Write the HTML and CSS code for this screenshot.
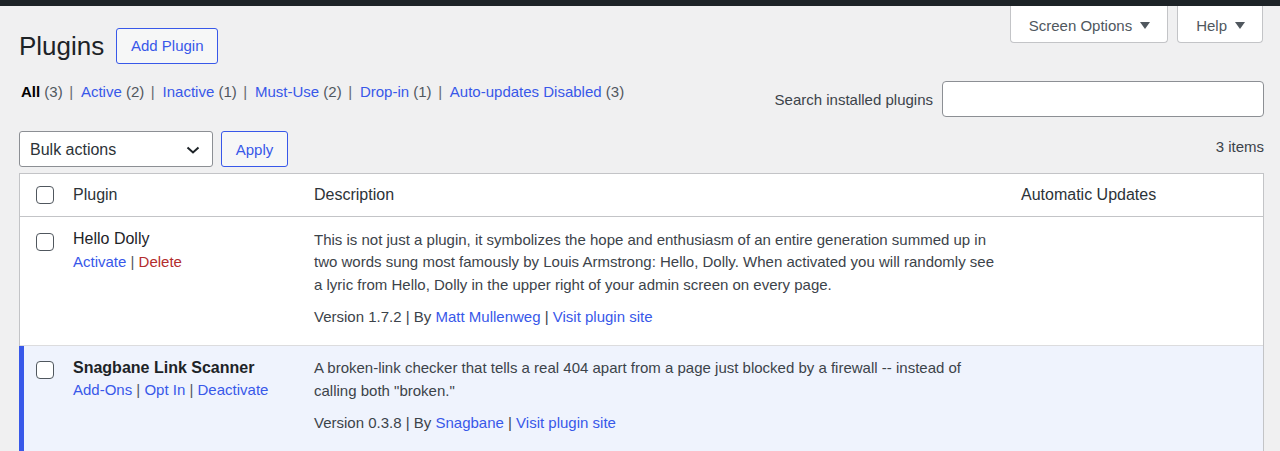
FILE: index.html
```html
<!DOCTYPE html>
<html lang="en">

<head>
  <meta charset="UTF-8">
  <meta name="viewport" content="width=device-width, initial-scale=1.0">
  <title>Plugins</title>
  <link rel="stylesheet" href="styles.css">
</head>

<body>
  <div class="adminbar"></div>

  <div class="screen-meta-links">
    <button class="meta-tab">Screen Options
      <svg width="10" height="7" viewBox="0 0 10 7"><polygon points="0,0 10,0 5,7" fill="#50575e" /></svg>
    </button>
    <button class="meta-tab">Help
      <svg width="10" height="7" viewBox="0 0 10 7"><polygon points="0,0 10,0 5,7" fill="#50575e" /></svg>
    </button>
  </div>

  <div class="wrap">
    <div class="page-head">
      <h1>Plugins</h1>
      <a href="#" class="button">Add Plugin</a>
    </div>

    <div class="filter-row">
      <ul class="subsubsub">
        <li><a href="#" class="current">All</a> <span class="count">(3)</span> <span class="sep">|</span></li>
        <li><a href="#">Active</a> <span class="count">(2)</span> <span class="sep">|</span></li>
        <li><a href="#">Inactive</a> <span class="count">(1)</span> <span class="sep">|</span></li>
        <li><a href="#">Must-Use</a> <span class="count">(2)</span> <span class="sep">|</span></li>
        <li><a href="#">Drop-in</a> <span class="count">(1)</span> <span class="sep">|</span></li>
        <li><a href="#">Auto-updates Disabled</a> <span class="count">(3)</span></li>
      </ul>
      <div class="search-box">
        <label for="plugin-search">Search installed plugins</label>
        <input type="search" id="plugin-search">
      </div>
    </div>

    <div class="tablenav">
      <div class="bulk">
        <div class="select">
          <span>Bulk actions</span>
          <svg width="14" height="8" viewBox="0 0 14 8"><polyline points="1.5,1.5 7,6.5 12.5,1.5" fill="none" stroke="#1d2327" stroke-width="2" /></svg>
        </div>
        <button class="button">Apply</button>
      </div>
      <div class="displaying-num">3 items</div>
    </div>

    <table class="plugins">
      <thead>
        <tr>
          <th class="check-column"><input type="checkbox"></th>
          <th class="col-name">Plugin</th>
          <th class="col-desc">Description</th>
          <th class="col-auto">Automatic Updates</th>
        </tr>
      </thead>
      <tbody>
        <tr class="inactive">
          <th class="check-column"><input type="checkbox"></th>
          <td class="plugin-title">
            <div class="name">Hello Dolly</div>
            <div class="row-actions"><a href="#">Activate</a> | <a href="#" class="delete">Delete</a></div>
          </td>
          <td class="column-description">
            <p>This is not just a plugin, it symbolizes the hope and enthusiasm of an entire generation summed up in two words sung most famously by Louis Armstrong: Hello, Dolly. When activated you will randomly see a lyric from Hello, Dolly in the upper right of your admin screen on every page.</p>
            <div class="plugin-version">Version 1.7.2 | By <a href="#">Matt Mullenweg</a> | <a href="#">Visit plugin site</a></div>
          </td>
          <td class="column-auto"></td>
        </tr>
        <tr class="active">
          <th class="check-column"><input type="checkbox"></th>
          <td class="plugin-title">
            <div class="name"><strong>Snagbane Link Scanner</strong></div>
            <div class="row-actions"><a href="#">Add-Ons</a> | <a href="#">Opt In</a> | <a href="#">Deactivate</a></div>
          </td>
          <td class="column-description">
            <p>A broken-link checker that tells a real 404 apart from a page just blocked by a firewall -- instead of calling both "broken."</p>
            <div class="plugin-version">Version 0.3.8 | By <a href="#">Snagbane</a> | <a href="#">Visit plugin site</a></div>
          </td>
          <td class="column-auto"></td>
        </tr>
      </tbody>
    </table>
  </div>
</body>

</html>
```

FILE: styles.css
```css
* {
  box-sizing: border-box;
}

body {
  margin: 0;
  background: #f0f0f1;
  color: #3c434a;
  font-family: "Liberation Sans", Arial, sans-serif;
  font-size: 15px;
  line-height: 22.5px;
}

a {
  color: #3858e9;
  text-decoration: none;
}

.adminbar {
  height: 6px;
  background: #1d2327;
}

.screen-meta-links {
  float: right;
  display: flex;
  gap: 9px;
  margin-right: 17px;
}

.meta-tab {
  display: flex;
  align-items: center;
  gap: 8px;
  height: 37px;
  padding: 2px 17px 0 18px;
  background: white;
  border: 1px solid #c3c4c7;
  border-top: none;
  border-radius: 0 0 4px 4px;
  color: #50575e;
  font-family: inherit;
  font-size: 15px;
}

.wrap {
  padding: 22px 16px 0 19px;
}

.page-head {
  display: flex;
  align-items: center;
  height: 36px;
}

.page-head h1 {
  margin: 0 12px 0 0;
  font-size: 26px;
  font-weight: 400;
  line-height: 36px;
  color: #1d2327;
}

.button {
  display: inline-flex;
  align-items: center;
  height: 36px;
  padding: 0 13.7px;
  background: #f6f7f7;
  border: 1px solid #3858e9;
  border-radius: 3px;
  color: #3858e9;
  font-family: inherit;
  font-size: 15px;
}

.filter-row {
  display: flex;
  justify-content: space-between;
  align-items: flex-start;
  margin-top: 17px;
}

.subsubsub {
  list-style: none;
  margin: 0;
  padding: 1px 0 0 2px;
  line-height: 20px;
  color: #646970;
}

.subsubsub li {
  display: inline;
}

.subsubsub .current {
  color: #000;
  font-weight: 700;
}

.subsubsub .count {
  color: #50575e;
}

.subsubsub .sep {
  margin: 0 3.6px 0 2.4px;
}

.search-box {
  display: flex;
  align-items: center;
  gap: 9px;
}

.search-box label {
  padding-top: 2px;
  color: #3c434a;
}

.search-box input {
  width: 322px;
  height: 36px;
  margin: 0;
  border: 1px solid #8c8f94;
  border-radius: 4px;
  background: white;
}

.tablenav {
  display: flex;
  justify-content: space-between;
  margin-top: 14px;
  height: 36px;
}

.bulk {
  display: flex;
  gap: 8px;
}

.select {
  display: flex;
  align-items: center;
  justify-content: space-between;
  width: 194px;
  height: 36px;
  padding: 2px 12px 0 10px;
  background: white;
  border: 1px solid #8c8f94;
  border-radius: 3px;
  color: #2c3338;
  font-size: 16px;
}

.displaying-num {
  margin-top: 6px;
  line-height: 20px;
  color: #3c434a;
}

.plugins {
  width: 100%;
  margin-top: 6px;
  table-layout: fixed;
  border-collapse: separate;
  border-spacing: 0;
  background: white;
  border: 1px solid #c3c4c7;
}

.plugins thead th {
  padding: 10px 10px;
  font-size: 16px;
  font-weight: 400;
  line-height: 22px;
  text-align: left;
  color: #2c3338;
  border-bottom: 1px solid #c3c4c7;
}

.plugins .check-column {
  width: 43px;
  padding-left: 16px;
  padding-right: 0;
}

.plugins .col-name {
  width: 241px;
}

.plugins .col-desc {
  width: 707px;
}

.plugins input[type="checkbox"] {
  appearance: none;
  display: block;
  width: 18px;
  height: 18px;
  margin: 0;
  background: white;
  border: 1px solid #50575e;
  border-radius: 4px;
}

.plugins tbody th,
.plugins tbody td {
  vertical-align: top;
  text-align: left;
  border-bottom: 1px solid #dcdcde;
}

.plugins tbody tr:last-child th,
.plugins tbody tr:last-child td {
  border-bottom: none;
}

.plugins tbody .check-column {
  padding-top: 16px;
}

.plugin-title {
  padding: 11px 10px 17px;
  white-space: nowrap;
}

.plugin-title .name {
  font-size: 16px;
  color: #1d2327;
}

.row-actions {
  color: #50575e;
}

.row-actions .delete {
  color: #b32d2e;
}

.column-description {
  padding: 11.5px 10px 16px;
}

.column-description p {
  margin: 0;
}

.plugin-version {
  margin-top: 10px;
}

.plugins tr.active th,
.plugins tr.active td {
  background: #eff3fd;
}

.plugins tr.active .check-column {
  padding-top: 15px;
  box-shadow: inset 4px 0 0 #3858e9, -1px 0 0 #3858e9;
}
```
